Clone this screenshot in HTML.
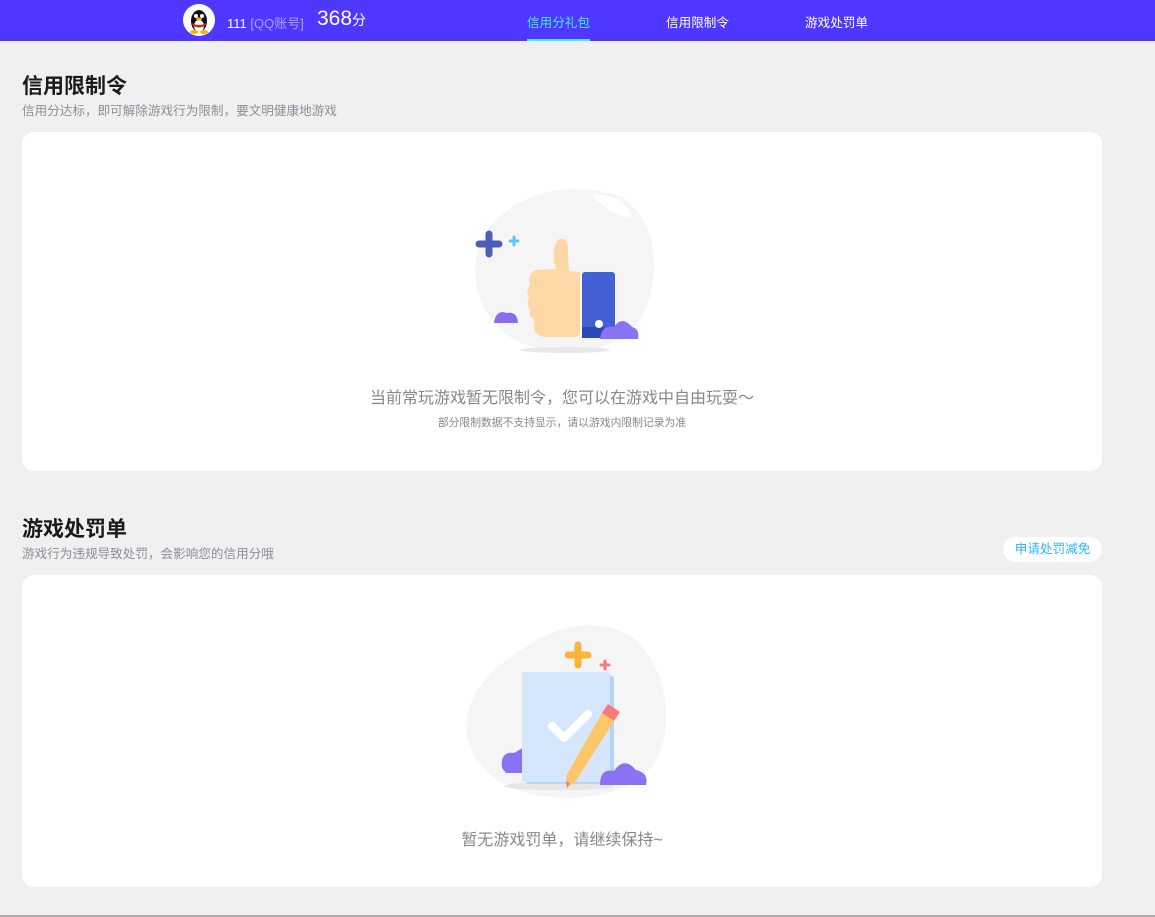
<!DOCTYPE html>
<html><head><meta charset="utf-8">
<style>
*{margin:0;padding:0;box-sizing:border-box}
body{width:1155px;height:917px;background:#f0f0f0;font-family:"Liberation Sans","Noto Sans CJK SC",sans-serif;position:relative;overflow:hidden}
.hdr{position:absolute;left:0;top:0;width:1155px;height:41px;background:#5037ff;color:#fff}
.hdr .av{position:absolute;left:183px;top:4px;width:32px;height:32px;border-radius:50%;background:#fff;overflow:hidden}
.hdr .name{position:absolute;left:227px;top:13px;font-size:13px}
.hdr .name span{color:#a9a0ff}
.hdr .score{position:absolute;left:317px;top:7px;font-size:21px}
.hdr .score small{font-size:14px}
.nav{position:absolute;top:12px;font-size:12.6px}
.nav.on{color:#3ff0f0}
.nav.on:after{content:"";position:absolute;left:0;right:0;top:27px;height:2px;background:#3ff0f0}
h2{position:absolute;left:22px;font-size:21px;font-weight:bold;color:#1a1a1a}
.sub{position:absolute;left:22px;font-size:12.6px;color:#8a8f99}
.card{position:absolute;left:22px;width:1080px;background:#fff;border-radius:12px}
.t1{position:absolute;width:100%;text-align:center;font-size:16px;color:#888}
.t2{position:absolute;width:100%;text-align:center;font-size:10.8px;color:#888}
.btn{position:absolute;left:1003px;top:537px;width:99px;height:25px;border-radius:13px;background:#fff;color:#2ab4ff;font-size:12.6px;text-align:center;line-height:25px}
.line{position:absolute;left:0;top:915px;width:1155px;height:2px;background:#b0a8ac}
</style></head><body>
<div class="hdr">
 <div class="av"><svg width="32" height="32" viewBox="0 0 32 32"><ellipse cx="16" cy="17" rx="8" ry="11" fill="#111"/><ellipse cx="16" cy="22" rx="5" ry="6" fill="#fff"/><circle cx="13" cy="12" r="2" fill="#fff"/><circle cx="19" cy="12" r="2" fill="#fff"/><ellipse cx="16" cy="15" rx="3" ry="1.5" fill="#f5b400"/><path d="M9 19 Q16 23 23 19 L22 22 Q16 25 10 22Z" fill="#e02020"/><ellipse cx="11" cy="28" rx="4" ry="2" fill="#f5b400"/><ellipse cx="21" cy="28" rx="4" ry="2" fill="#f5b400"/></svg></div>
 <div class="name">111 <span>[QQ账号]</span></div>
 <div class="score">368<small>分</small></div>
 <div class="nav on" style="left:527px">信用分礼包</div>
 <div class="nav" style="left:666px">信用限制令</div>
 <div class="nav" style="left:805px">游戏处罚单</div>
</div>

<h2 style="top:70px">信用限制令</h2>
<div class="sub" style="top:100px">信用分达标，即可解除游戏行为限制，要文明健康地游戏</div>
<div class="card" style="top:132px;height:339px">
 <svg style="position:absolute;left:450px;top:55px" width="190" height="170" viewBox="0 0 190 170">
  <path d="M40 20 Q90 -10 150 10 Q190 40 180 100 Q170 160 100 165 Q20 165 5 100 Q-5 50 40 20Z" fill="#f5f5f5"/>
  <path d="M120 8 Q150 5 160 30 Q140 30 120 8Z" fill="#fff"/>
  <ellipse cx="93" cy="163" rx="45" ry="3" fill="#e8e8e8"/>
  <path d="M17 47 V67 M7 57 H27" stroke="#4b5fb8" stroke-width="7" stroke-linecap="round"/>
  <path d="M42 50 V58 M38 54 H46" stroke="#5fc6f0" stroke-width="3" stroke-linecap="round"/>
  <path d="M22 136 Q24 122 35 126 Q45 124 46 136Z" fill="#8b6cf0"/>
  <path d="M64 83 L84 82 Q80 72 83 58 Q86 50 92 52 Q97 56 96 66 L97 84 L108 85 L108 145 Q108 150 100 150 L72 150 Q62 148 62 140 L62 132 Q56 130 58 122 Q54 118 57 110 Q53 104 58 98 Q55 86 64 83Z" fill="#fdd7a6"/>
  <rect x="110" y="85" width="33" height="66" rx="3" fill="#4361d4"/>
  <rect x="110" y="140" width="33" height="11" fill="#2f48b8"/>
  <circle cx="127" cy="137" r="4" fill="#fff"/>
  <path d="M128 152 Q130 137 142 140 Q150 128 160 140 Q168 142 166 152Z" fill="#8b72f5"/>
 </svg>
 <div class="t1" style="top:252px">当前常玩游戏暂无限制令，您可以在游戏中自由玩耍～</div>
 <div class="t2" style="top:282px">部分限制数据不支持显示，请以游戏内限制记录为准</div>
</div>

<h2 style="top:513px">游戏处罚单</h2>
<div class="sub" style="top:543px">游戏行为违规导致处罚，会影响您的信用分哦</div>
<div class="btn">申请处罚减免</div>
<div class="card" style="top:575px;height:312px">
 <svg style="position:absolute;left:442px;top:43px" width="210" height="190" viewBox="0 0 210 190">
  <path d="M60 30 Q120 -10 170 20 Q210 60 200 120 Q190 175 110 180 Q20 180 3 120 Q-5 70 60 30Z" fill="#f5f5f5"/>
  <ellipse cx="95" cy="168" rx="55" ry="4" fill="#e6e6e6"/>
  <path d="M38 150 Q36 133 50 135 L62 128 L62 155 L42 155Z" fill="#8b72f5"/>
  <rect x="62" y="58" width="88" height="108" rx="3" fill="#b6d3fa"/>
  <rect x="58" y="54" width="88" height="110" rx="3" fill="#d6e6fd"/>
  <path d="M88 108 L100 120 L124 96" stroke="#fff" stroke-width="8" fill="none" stroke-linecap="round" stroke-linejoin="round"/>
  <path d="M138 95 L150 103 L112 163 L103 170 L102 158Z" fill="#fbc76a"/>
  <path d="M138 95 L144 86 L156 94 L150 103Z" fill="#f57a7a"/>
  <path d="M103 170 L102 163 L106 165Z" fill="#f57a7a"/>
  <path d="M114 27 V47 M104 37 H124" stroke="#fbb33a" stroke-width="7" stroke-linecap="round"/>
  <path d="M141 43 V51 M137 47 H145" stroke="#f57a7a" stroke-width="3" stroke-linecap="round"/>
  <path d="M136 167 Q136 150 150 153 Q160 138 172 152 Q185 155 182 167Z" fill="#8b72f5"/>
 </svg>
 <div class="t1" style="top:251px">暂无游戏罚单，请继续保持~</div>
</div>
<div class="line"></div>
</body></html>
